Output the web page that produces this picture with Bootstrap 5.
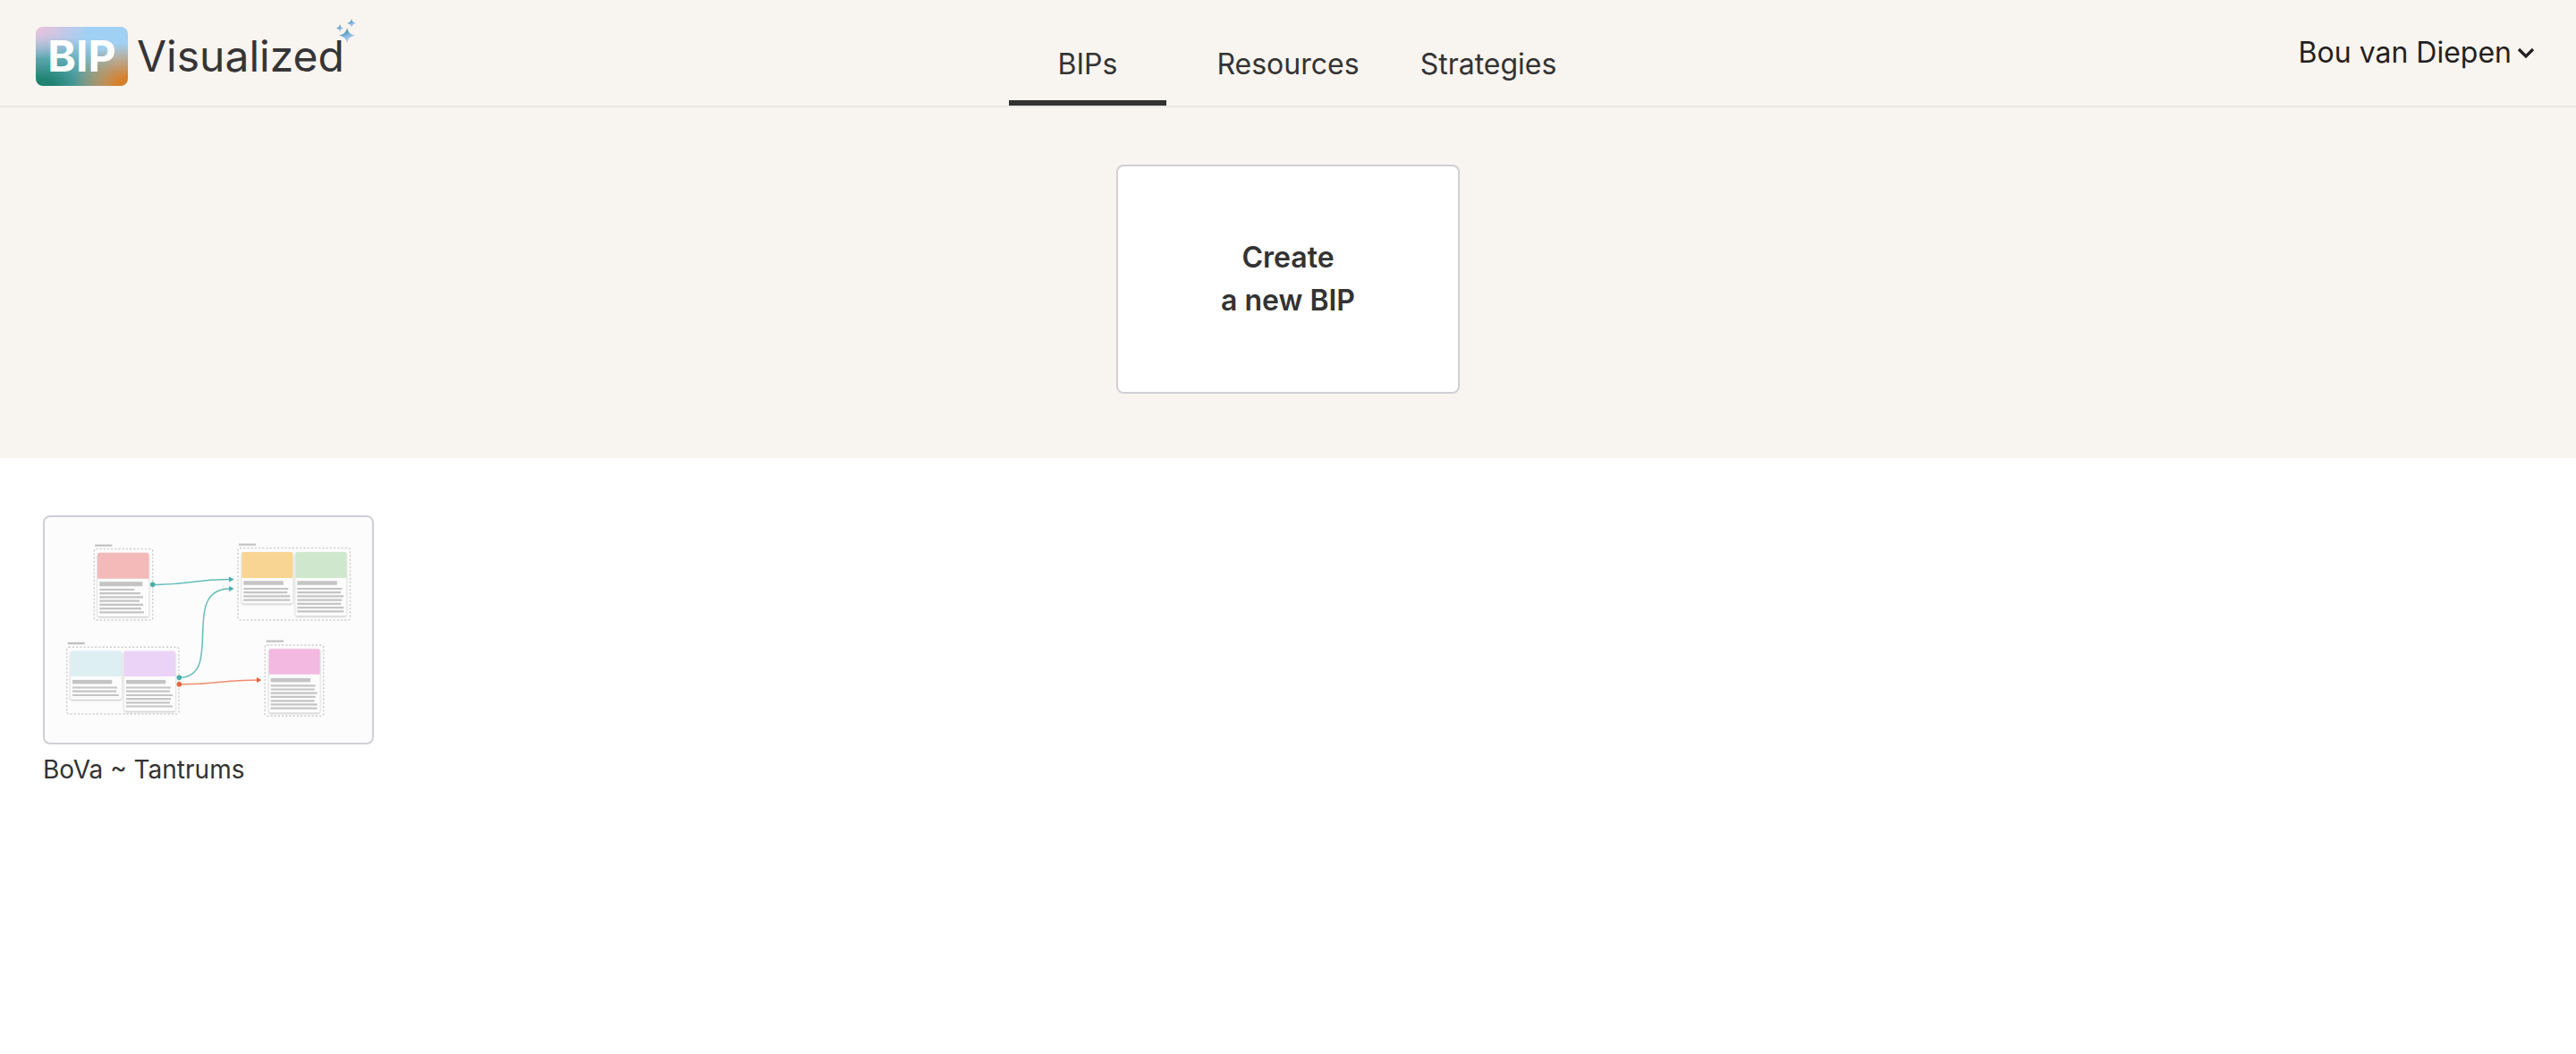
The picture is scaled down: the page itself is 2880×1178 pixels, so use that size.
<!DOCTYPE html>
<html lang="en">
<head>
<meta charset="utf-8">
<meta name="viewport" content="width=device-width, initial-scale=1">
<title>BIP Visualized</title>
<link href="https://cdn.jsdelivr.net/npm/bootstrap@5.3.0/dist/css/bootstrap.min.css" rel="stylesheet">
<style>
  body { font-family: Inter, "Liberation Sans", sans-serif; color: #333; background: #fff; }
  .app-header { background: #f8f4ef; border-bottom: 2px solid #e6e8e7; padding: 0 40px; min-height: 120px; }
  .header-side { flex: 1 1 0; }
  .app-tabs { gap: 48px; }
  .app-tabs .nav-link { width: 176px; padding: 48px 0 16px; border-bottom: 6px solid transparent; font-size: 32px; line-height: 48px; color: #333; }
  .app-tabs .nav-link.active { border-bottom-color: #333; }
  .brand { gap: 10px; color: #353437; font-size: 48px; line-height: 66px; }
  .brand-tile { width: 103px; height: 66px; border-radius: 8px; color: #fff; font-weight: 700;
    background:
      radial-gradient(ellipse 60px 36px at 0 0, #efc0d9 0, rgba(239,192,217,0) 100%),
      radial-gradient(ellipse 62px 48px at 100% 100%, #d6802c 20%, rgba(214,128,44,0) 100%),
      radial-gradient(ellipse 96px 58px at 8px 100%, #1f8272 12%, rgba(31,130,114,0) 100%),
      #a0d0f3; }
  .brand-stars { top: -1px; right: -14px; }
  .user-menu { font-size: 32px; line-height: 48px; color: #231f20; gap: 6px; padding: 0 6px 0 0; }
  .hero { background: #f8f4ef; padding: 64px 48px 72px; }
  .new-bip { width: 384px; height: 256px; border: 2px solid #d0cfd5; border-radius: 8px; background: #fff; color: #333; font-size: 32px; line-height: 48px; }
  .bip-list { padding: 64px 48px; gap: 48px; }
  .bip-item { width: 370px; color: #333; font-size: 28px; line-height: 40px; }
  .bip-thumb { border: 2px solid #d0cfd5; border-radius: 8px; background: #fcfcfc; margin-bottom: 8px; }
  .frame-box { fill: none; stroke: #d0d0d0; stroke-width: 1.5; stroke-dasharray: 2.2 2; }
  .sheet { fill: #fcfcfc; filter: drop-shadow(0 1px 1px rgba(0,0,0,.25)); }
  .tag-bar { fill: none; stroke: #c2c2c2; stroke-width: 2.3; }
  .copy-lines { fill: none; stroke: #c4c4c4; stroke-width: 2.2; }
  .copy-title { fill: #c4c4c4; }
</style>
</head>
<body>
<header class="app-header d-flex align-items-stretch">
  <div class="header-side d-flex align-items-center">
    <a class="brand d-flex align-items-center text-decoration-none position-relative pt-2" href="#" aria-label="BIP Visualized">
      <span class="brand-tile text-center">BIP</span>
      <span>Visualized</span>
      <svg class="brand-stars position-absolute" width="24" height="28" viewBox="0 0 24 28" aria-hidden="true">
        <defs><linearGradient id="star" x1=".2" y1="0" x2=".6" y2="1"><stop offset="0" stop-color="#3c8a80"/><stop offset=".4" stop-color="#6aa6c8"/><stop offset=".6" stop-color="#8dc0ea"/><stop offset="1" stop-color="#efc6dd"/></linearGradient></defs>
        <g fill="url(#star)">
          <path d="M13 10Q14 17 22 18.500Q14 20 13 27.500Q12 20 4 18.500Q12 17 13 10Z"/>
          <path d="M18 0Q18.500 4 23 5Q18.500 6 18 10Q17.500 6 13 5Q17.500 4 18 0Z"/>
          <path d="M5 6Q5.500 9.500 9 10.500Q5.500 11.500 5 15Q4.500 11.500 1 10.500Q4.500 9.500 5 6Z"/>
        </g>
      </svg>
    </a>
  </div>
  <nav class="app-tabs nav flex-nowrap text-center" aria-label="Main">
    <a class="nav-link active" aria-current="page" href="#">BIPs</a>
    <a class="nav-link" href="#">Resources</a>
    <a class="nav-link" href="#">Strategies</a>
  </nav>
  <div class="header-side d-flex align-items-center justify-content-end">
    <button type="button" class="user-menu btn border-0 d-flex align-items-center">Bou van Diepen
      <svg width="20" height="14" viewBox="0 0 20 14" fill="none" stroke="#231f20" stroke-width="3.200" aria-hidden="true"><path d="M2 3L10 11L18 3"/></svg>
    </button>
  </div>
</header>
<main>
  <section class="hero d-flex justify-content-center">
    <button type="button" class="new-bip btn fw-semibold">Create<br>a new BIP</button>
  </section>
  <section class="bip-list d-flex flex-wrap">
    <a class="bip-item d-block text-decoration-none" href="#">
      <span class="bip-thumb d-block overflow-hidden">
        <svg class="d-block w-100" viewBox="0 0 366 252" aria-hidden="true">
          <!-- frames and their tags -->
          <g class="frame-box">
            <rect x="55.300" y="35.500" width="65.400" height="79.500" rx="2"/>
            <rect x="216" y="34.500" width="125.500" height="80.500" rx="2"/>
            <rect x="24.700" y="145.300" width="125.300" height="74.700" rx="2"/>
            <rect x="246.300" y="143" width="65.400" height="79.300" rx="2"/>
          </g>
          <path class="tag-bar" d="M56 31.700h19.300M217 30.700h19M25.700 141h19M247.700 138.700h19.300"/>
          <!-- red sheet -->
          <g transform="translate(59 39.700)">
            <rect class="sheet" width="57.500" height="71.300" rx="2"/>
            <path fill="#f4b9b9" d="M0 29V2q0-2 2-2h53.500q2 0 2 2v27z"/>
            <rect class="copy-title" x="2.300" y="32.500" width="48" height="5"/>
            <path class="copy-lines" d="M2.300 41.300h39M2.300 45.500h45.700M2.300 49.700h48.700M2.300 54h44.700M2.300 58.200h48.700M2.300 62.400h46.700M2.300 66.600h49.700"/>
          </g>
          <!-- yellow sheet -->
          <g transform="translate(220.300 39)">
            <rect class="sheet" width="57" height="57.500" rx="2"/>
            <path fill="#f8d592" d="M0 29V2q0-2 2-2h53q2 0 2 2v27z"/>
            <rect class="copy-title" x="2" y="32.300" width="44.500" height="4.500"/>
            <path class="copy-lines" d="M2 41h50M2 45.200h49M2 49.400h52M2 53.600h52"/>
          </g>
          <!-- green sheet -->
          <g transform="translate(280.300 39)">
            <rect class="sheet" width="57" height="71.300" rx="2"/>
            <path fill="#cfe8cd" d="M0 29V2q0-2 2-2h53q2 0 2 2v27z"/>
            <rect class="copy-title" x="2" y="32.300" width="44.500" height="4.500"/>
            <path class="copy-lines" d="M2 41h50M2 45.200h49M2 49.400h52M2 53.600h50M2 57.800h49M2 62.100h52M2 66.300h52"/>
          </g>
          <!-- blue sheet -->
          <g transform="translate(28.700 149.700)">
            <rect class="sheet" width="57.300" height="54" rx="2"/>
            <path fill="#deeff4" d="M0 28.300V2q0-2 2-2h53.300q2 0 2 2v26.300z"/>
            <rect class="copy-title" x="2.300" y="32.200" width="44.200" height="4.400"/>
            <path class="copy-lines" d="M2.300 40.800h50M2.300 45h49M2.300 49.300h52"/>
          </g>
          <!-- purple sheet -->
          <g transform="translate(88.700 149.700)">
            <rect class="sheet" width="57.300" height="67" rx="2"/>
            <path fill="#ebd3f7" d="M0 28.300V2q0-2 2-2h53.300q2 0 2 2v26.300z"/>
            <rect class="copy-title" x="2.300" y="32.200" width="44.200" height="4.400"/>
            <path class="copy-lines" d="M2.300 40.800h50M2.300 45h49M2.300 49.300h52M2.300 53.400h50M2.300 57.600h49M2.300 61.800h52"/>
          </g>
          <!-- pink sheet -->
          <g transform="translate(250.700 147.300)">
            <rect class="sheet" width="57" height="71.300" rx="2"/>
            <path fill="#f3b9e0" d="M0 28.500V2q0-2 2-2h53q2 0 2 2v26.500z"/>
            <rect class="copy-title" x="2" y="32.600" width="44.400" height="4.400"/>
            <path class="copy-lines" d="M2 41h50M2 45.200h49M2 49.400h52M2 53.600h50M2 58h49M2 62.100h52M2 66.300h52"/>
          </g>
          <!-- connectors -->
          <g fill="none" stroke="#66bdb9" stroke-width="1.500">
            <path d="M121 75.400C163 76 165 69.500 207 69.500"/>
            <path d="M150 179.300C202 179.300 150 80 207 80"/>
            <path stroke="#ec8d70" d="M150 186.800C192 187.500 194 182 238 182"/>
          </g>
          <g fill="#4aaeaa">
            <circle cx="120.700" cy="75.300" r="2.800"/>
            <circle cx="150.300" cy="179.300" r="2.800"/>
            <path d="M206 66.500l5.700 3-5.700 3zM206 77l5.700 3-5.700 3z"/>
          </g>
          <g fill="#e8623f">
            <circle cx="150.300" cy="186.700" r="2.800"/>
            <path d="M237 179l5.300 3-5.300 3z"/>
          </g>
        </svg>
      </span>
      BoVa ~ Tantrums
    </a>
  </section>
</main>
<script src="https://cdn.jsdelivr.net/npm/bootstrap@5.3.0/dist/js/bootstrap.bundle.min.js"></script>
</body>
</html>
